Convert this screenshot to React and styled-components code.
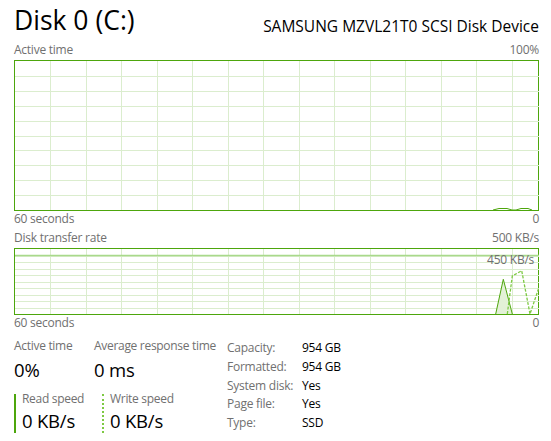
import { Fragment } from "react";
import styled, { createGlobalStyle } from "styled-components";

const GREEN = "#4da60c";
const LIGHT_GREEN = "#7dc943";
const GRID = "#dbedce";
const LABEL = "#707070";

const GlobalStyle = createGlobalStyle`
  body {
    margin: 0;
    background: #fff;
    font-family: "Open Sans", "Noto Sans", sans-serif;
    color: #000;
  }
`;

const Page = styled.div`
  width: 551px;
  height: 441px;
  box-sizing: border-box;
  padding: 4px 12px 0 14px;
  display: flex;
  flex-direction: column;
  overflow: hidden;
`;

const Header = styled.div`
  display: flex;
  justify-content: space-between;
  align-items: flex-end;
`;

const Title = styled.div`
  font-size: 26.5px;
  line-height: 32px;
`;

const Device = styled.div`
  font-size: 15.5px;
  line-height: 20px;
`;

const AxisRow = styled.div`
  display: flex;
  justify-content: space-between;
  font-size: 12px;
  line-height: 16px;
  color: ${LABEL};
  letter-spacing: -0.25px;
  margin-top: ${(p) => p.$top || 0}px;
  margin-bottom: ${(p) => p.$bottom || 0}px;
`;

const ChartBox = styled.div`
  position: relative;
  height: ${(p) => p.$height}px;
  border: 1px solid ${GREEN};
  line-height: 0;
`;

const Marker = styled.span`
  position: absolute;
  right: 4px;
  top: 3px;
  font-size: 12px;
  line-height: 16px;
  color: ${LABEL};
  letter-spacing: -0.25px;
`;

const Stats = styled.div`
  display: flex;
  margin-top: 7px;
`;

const LeftStats = styled.div`
  display: flex;
  flex-direction: column;
  width: 213px;
`;

const StatRow = styled.div`
  display: flex;
  margin-top: ${(p) => p.$top || 0}px;
`;

const Stat = styled.div`
  display: flex;
  flex-direction: column;
  width: ${(p) => p.$width}px;
`;

const Speed = styled.div`
  display: flex;
  flex-direction: column;
  width: ${(p) => p.$width}px;
  box-sizing: border-box;
  padding-left: 6px;
  border-left: 2px ${(p) => (p.$dotted ? "dotted" : "solid")}
    ${(p) => (p.$dotted ? LIGHT_GREEN : GREEN)};
`;

const StatLabel = styled.div`
  font-size: 12px;
  line-height: ${(p) => p.$lh || 16}px;
  color: ${LABEL};
  letter-spacing: -0.3px;
  white-space: nowrap;
`;

const StatValue = styled.div`
  font-size: 18.5px;
  line-height: 24px;
  margin-top: ${(p) => p.$top || 0}px;
  letter-spacing: -0.2px;
  white-space: nowrap;
`;

const InfoTable = styled.div`
  display: grid;
  grid-template-columns: 75px auto;
  font-size: 12px;
  line-height: 18px;
  letter-spacing: -0.25px;
  margin-top: 1px;
`;

const InfoKey = styled.div`
  color: ${LABEL};
`;

const InfoVal = styled.div`
  color: #000;
`;

function Grid({ width, height, rows }) {
  const cols = [];
  for (let k = 0; k < 14; k++) cols.push(Math.round(35 + 35.5 * k) + 0.5);
  const lines = [];
  for (let r = 1; r < rows; r++) lines.push(Math.round((height * r) / rows) + 0.5);
  return (
    <g stroke={GRID} strokeWidth="1">
      {cols.map((x) => (
        <line key={"c" + x} x1={x} y1="0" x2={x} y2={height} />
      ))}
      {lines.map((y) => (
        <line key={"r" + y} x1="0" y1={y} x2={width} y2={y} />
      ))}
    </g>
  );
}

function ActiveChart() {
  const w = 524;
  const h = 149;
  return (
    <ChartBox $height={h}>
      <svg width={w} height={h}>
        <Grid width={w} height={h} rows={10} />
        <polyline
          points="478,149 484,147.5 492,147.5 497,149 501,149 506,147.5 513,147.5 517,149"
          fill="none"
          stroke={GREEN}
          strokeWidth="1"
        />
      </svg>
    </ChartBox>
  );
}

function TransferChart() {
  const w = 524;
  const h = 65;
  return (
    <ChartBox $height={h}>
      <svg width={w} height={h}>
        <Grid width={w} height={h} rows={10} />
        <line x1="0" y1="6.5" x2={w} y2="6.5" stroke="#a9d98b" strokeWidth="1.5" />
        <polygon points="480.7,65 488.3,30.3 497.3,65" fill="#e3f1d7" stroke="none" />
        <polyline
          points="480.7,65 488.3,30.3 497.3,65"
          fill="none"
          stroke={GREEN}
          strokeWidth="1"
        />
        <polyline
          points="492.3,65 497.3,27 506.7,21.7 515,65 524,38.3"
          fill="none"
          stroke={LIGHT_GREEN}
          strokeWidth="1.3"
          strokeDasharray="3 1.5"
        />
      </svg>
      <Marker>450 KB/s</Marker>
    </ChartBox>
  );
}

const info = [
  ["Capacity:", "954 GB"],
  ["Formatted:", "954 GB"],
  ["System disk:", "Yes"],
  ["Page file:", "Yes"],
  ["Type:", "SSD"],
];

export default function App() {
  return (
    <>
      <GlobalStyle />
      <Page>
        <Header>
          <Title>Disk 0 (C:)</Title>
          <Device>SAMSUNG MZVL21T0 SCSI Disk Device</Device>
        </Header>
        <AxisRow $top={6} $bottom={2}>
          <span>Active time</span>
          <span>100%</span>
        </AxisRow>
        <ActiveChart />
        <AxisRow>
          <span>60 seconds</span>
          <span>0</span>
        </AxisRow>
        <AxisRow $top={3} $bottom={2}>
          <span>Disk transfer rate</span>
          <span>500 KB/s</span>
        </AxisRow>
        <TransferChart />
        <AxisRow>
          <span>60 seconds</span>
          <span>0</span>
        </AxisRow>
        <Stats>
          <LeftStats>
            <StatRow>
              <Stat $width={80}>
                <StatLabel>Active time</StatLabel>
                <StatValue $top={4}>0%</StatValue>
              </Stat>
              <Stat $width={130}>
                <StatLabel>Average response time</StatLabel>
                <StatValue $top={4}>0 ms</StatValue>
              </Stat>
            </StatRow>
            <StatRow $top={12}>
              <Speed $width={88}>
                <StatLabel $lh={10}>Read speed</StatLabel>
                <StatValue $top={5}>0 KB/s</StatValue>
              </Speed>
              <Speed $width={110} $dotted>
                <StatLabel $lh={10}>Write speed</StatLabel>
                <StatValue $top={5}>0 KB/s</StatValue>
              </Speed>
            </StatRow>
          </LeftStats>
          <InfoTable>
            {info.map(([k, v]) => (
              <Fragment key={k}>
                <InfoKey>{k}</InfoKey>
                <InfoVal>{v}</InfoVal>
              </Fragment>
            ))}
          </InfoTable>
        </Stats>
      </Page>
    </>
  );
}
